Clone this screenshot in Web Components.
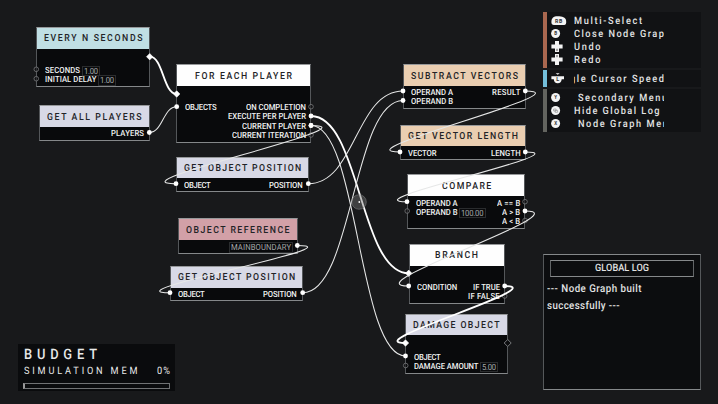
<!DOCTYPE html>
<html lang="en">
<head>
<meta charset="utf-8">
<title>Node Graph</title>
<style>
html,body{margin:0;background:#18191b;overflow:hidden}
</style>
</head>
<body>
<graph-screen></graph-screen>
<script>
// Condensed label whose tracking is set so that it fills the width w.
class FitText extends HTMLElement{
  connectedCallback(){
    const r=this.attachShadow({mode:'open'});
    r.innerHTML='<style>:host{display:block;white-space:pre;flex:none;line-height:1}span{display:inline-block;transform-origin:0 50%;text-rendering:geometricPrecision}</style><span><slot></slot></span>';
    const s=r.querySelector('span'),w=+this.getAttribute('w'),n=this.textContent.length,q=.9;
    this.style.width=w+'px';
    s.style.letterSpacing='0px';
    s.style.letterSpacing=((w/q-s.getBoundingClientRect().width)/(n-1)).toFixed(3)+'px';
    s.style.transform=`scaleX(${q})`;
  }
}
class GraphNode extends HTMLElement{
  connectedCallback(){
    const d=this.spec,[x,y,x2,y2,hb]=d.box;
    const r=this.attachShadow({mode:'open'});
    const row=o=>`<div class="row" style="margin-${o.side}:${o.gap}px"><fit-text w="${o.w}" ${o.box?'class="val"':''}>${o.t}</fit-text>${o.v?`<span class="box"><fit-text class="val" w="${o.vw}">${o.v}</fit-text></span>`:''}</div>`;
    const col=(a,side)=>`<div class="col ${side}">${a.map(o=>row({...o,side})).join('')}</div>`;
    r.innerHTML=`<style>
    :host{position:absolute;left:${x}px;top:${y}px;width:${x2-x}px;height:${y2-y}px;box-sizing:border-box;display:flex;flex-direction:column;background:#090a0c;border:1px solid #54575a;border-top-color:#96989a;border-bottom-color:#85888a;font:400 8.5px Roboto,sans-serif;color:#f1f2f2}
    header{height:${hb-y-1}px;flex:none;background:${d.color};color:#222326;display:flex;align-items:center;justify-content:center;font-size:9.7px;font-weight:500;padding-top:1px;box-sizing:border-box}
    main{display:flex;justify-content:space-between;padding-top:${d.first-hb-4.4}px}
    .col{display:flex;flex-direction:column}.right{align-items:flex-end}
    .row{height:9.4px;display:flex;align-items:center;gap:2px;font-weight:500}
    .box,.row>.val{border:1px solid #2a2c2e;padding:0 1px;height:8.5px;margin-bottom:-1px}
    .val{color:#a5a7a9;font-weight:400}
    </style><header><fit-text w="${d.tw}">${d.title}</fit-text></header><main>${col(d.left,'left')}${col(d.right||[],'right')}</main>`;
  }
}
const L=(t,w,gap=7.6,v,vw)=>({t,w,gap,v,vw}),R=(t,w,gap=4.4)=>({t,w,gap});
const lav='#d8d9e6',tan='#eaceb1',wht='#fefefe';
const NODES=[
 {title:'EVERY N SECONDS',tw:98.5,color:'#c0dfe4',box:[36,27,150.3,87,48.7],first:70.3,left:[L('SECONDS',35,7.6,'1.00',14),L('INITIAL DELAY',51.5,7.6,'1.00',14)]},
 {title:'GET ALL PLAYERS',tw:94.5,color:lav,box:[39,105,149.5,141,127],first:133.5,left:[],right:[R('PLAYERS',33)]},
 {title:'FOR EACH PLAYER',tw:97,color:wht,box:[176,64,311.3,143,86],first:107.5,left:[L('OBJECTS',31.6)],right:[R('ON COMPLETION',60),R('EXECUTE PER PLAYER',78),R('CURRENT PLAYER',64),R('CURRENT ITERATION',74.3)]},
 {title:'GET OBJECT POSITION',tw:117.3,color:lav,box:[176,156.5,309,192,178],first:185,left:[L('OBJECT',26.7,7.3)],right:[R('POSITION',33.6,5.2)]},
 {title:'OBJECT REFERENCE',tw:103.5,color:'#d2a0a7',box:[178,218,298,254,240],first:246.7,left:[],right:[{t:'MAINBOUNDARY',w:60,gap:4,box:1}]},
 {title:'GET OBJECT POSITION',tw:117.3,color:lav,box:[170,265.5,303,301,287.5],first:294,left:[L('OBJECT',26.7,7.3)],right:[R('POSITION',33.8,5)]},
 {title:'SUBTRACT VECTORS',tw:107,color:tan,box:[402.5,64,526,109,86],first:92.3,left:[L('OPERAND A',42),L('OPERAND B',42)],right:[R('RESULT',28.3)]},
 {title:'GET VECTOR LENGTH',tw:110,color:tan,box:[399.5,125,526,160,146],first:153,left:[L('VECTOR',28.6)],right:[R('LENGTH',29.6)]},
 {title:'COMPARE',tw:49.3,color:wht,box:[407,174,525.3,229,196],first:203,left:[L('OPERAND A',41.6),L('OPERAND B',41.6,7.6,'100.00',22.5)],right:[R('A == B',23.3,4),R('A &gt; B',18.2,4),R('A &lt; B',18.2,4)]},
 {title:'BRANCH',tw:43,color:wht,box:[408.5,243.5,505,304,265.5],first:287,left:[L('CONDITION',40.3)],right:[R('IF TRUE',27),R('IF FALSE',31.7)]},
 {title:'DAMAGE OBJECT',tw:86.5,color:lav,box:[405.3,313.5,508,374,335],first:357,left:[L('OBJECT',26.7,7.3),L('DAMAGE AMOUNT',64.5,7.3,'5.00',14)]}
];
// start x, start y, end x, end y, 1 when the wire carries execution
const WIRES=[[149.7,56.7,176.7,94,1],[149.3,132.5,176.7,106.7],[311,116,408.7,273.3,1],[311,125.5,405.5,356],[311,125.5,176,183.7],[308.3,183.7,403,91],[302.7,292.7,403,100.5],[297.3,245.5,170,292.7],[525.3,91,400,152],[525.3,152,407,201.7],[525,211,408.7,286],[504.7,286,405.5,343,1]];
const OPEN=[[36.3,69.3],[36.3,78.7],[311,106.7],[311,135],[407.2,211],[525,201.7],[525,220.5],[504.7,296],[405.7,365.5]];
class GraphWires extends HTMLElement{
  connectedCallback(){
    const r=this.attachShadow({mode:'open'});let s='';
    const exec=new Set(['149.7,56.7','176.7,94','408.7,273.3','405.5,343']);
    const port=(x,y)=>exec.has(x+','+y)?`<path d="M${x} ${y-3.2}l3.2 3.2-3.2 3.2-3.2-3.2z" fill="#fff" stroke="#fff" stroke-width=".6" stroke-linejoin="round"/>`:`<circle cx="${x}" cy="${y}" r="2.4" fill="#fff"/>`;
    for(const [x,y] of OPEN)s+=`<circle cx="${x}" cy="${y}" r="2.3" fill="#0b0c0e" fill-opacity=".5" stroke="#77797b" stroke-width=".8"/>`;
    s+='<path d="M507.7 339.5l3.5 3.5-3.5 3.5-3.5-3.5z" fill="#0b0c0e" stroke="#85878a" stroke-width=".9"/>';
    for(const [a,b,c,d,e] of WIRES){const k=Math.abs(c-a)/2;s+=`<path d="M${a} ${b}C${a+k} ${b} ${c-k} ${d} ${c} ${d}" fill="none" stroke="${e?'#fff':'#e6e7e7'}" stroke-width="${e?1.8:1.05}"/>`+port(a,b)+port(c,d);}
    s+='<circle cx="359" cy="202" r="7.3" fill="#777" fill-opacity=".42" stroke="#858789" stroke-opacity=".65" stroke-width=".8"/><circle cx="359.3" cy="202" r=".9" fill="#fff"/>';
    r.innerHTML=`<style>:host{position:absolute;inset:0;display:block}svg{display:block}</style><svg width="718" height="404">${s}</svg>`;
  }
}
const glyph=(c,x,y,z=4.5,f='#333')=>`<text x="${x}" y="${y}" font-family="Roboto" font-weight="700" font-size="${z}" fill="${f}" text-anchor="middle">${c}</text>`;
const disc='<circle cx="4.6" cy="6.5" r="4.5" fill="#f4f4f4"/>';
const pad='<path d="M4 1h4v3.600h3.600v4H8V12H4V8.600H.4v-4H4z" fill="#f4f4f4"/>';
const ICONS={
 rb:'<path d="M.4 8C.6 4 2.500 2.300 6.500 2.300c5 0 8 1 8.600 4.200.5 3.300-.4 4.500-2 4.500H3C1.300 11 .3 10 .4 8z" fill="#f4f4f4"/>'+glyph('R',5.700,8.600,5.200)+glyph('B',9.600,8.600,5.200),
 b:disc+glyph('B',4.600,8.200),y:disc+glyph('Y',4.600,8.200),x:disc+glyph('X',4.600,8.200),
 view:disc+'<path d="M2.600 5h2.500v2H2.600zM4.100 6.300h2.500v2H4.100z" fill="none" stroke="#888" stroke-width=".6"/>',
 down:pad+'<path d="M6 8.800v2.200" stroke="#555" stroke-width="1"/>',
 up:pad+'<path d="M6 2v2.200" stroke="#555" stroke-width="1"/>',
 stick:'<path d="M4.700 1.200h4L6.700 2.800zM.4 4.200h12.600v3h-2.300c-.3 2.600-1.500 4-4 4S3 9.800 2.800 7.200H.4z" fill="#f4f4f4"/>'+glyph('L',6.700,9.400,5.500)
};
class HintRow extends HTMLElement{
  connectedCallback(){
    const g=n=>this.getAttribute(n);
    this.attachShadow({mode:'open'}).innerHTML=`<style>:host{display:flex;align-items:center;height:13.1px;color:#e4e5e5;font:500 10.2px Roboto,sans-serif}svg{width:18px;height:13px;flex:none;margin-left:3.5px}.clip{width:90.3px;margin-left:5.2px;overflow:hidden;padding:3px 0 1px}fit-text{margin-left:${g('dx')||0}px}</style><svg viewBox="0 0 18 13">${ICONS[g('icon')]}</svg><div class="clip"><fit-text w="${g('w')}">${g('text')}</fit-text></div>`;
  }
}
class HintGroup extends HTMLElement{
  connectedCallback(){
    this.attachShadow({mode:'open'}).innerHTML=`<style>:host{display:flex;flex-direction:column;justify-content:center;box-sizing:border-box;border-left:4px solid ${this.getAttribute('bar')};background:#111214;height:${this.getAttribute('h')}px}</style><slot></slot>`;
  }
}
class LogPanel extends HTMLElement{
  connectedCallback(){
    this.attachShadow({mode:'open'}).innerHTML=`<style>:host{display:block;box-sizing:border-box;width:158px;height:136px;background:#0c0d0f;border:1px solid #55585a;border-top-color:#85888a;border-bottom-color:#85888a;color:#e2e3e3;padding:4.5px 6px;font:500 10.2px Roboto,sans-serif}header{height:17px;box-sizing:border-box;border:1px solid #626567;border-top-color:#85888a;border-bottom-color:#85888a;display:flex;align-items:center;justify-content:center;padding-top:1px}p{margin:5px 0 0 -3px;display:grid;grid-auto-rows:16.3px;align-items:center;font-size:10.8px}</style><header><fit-text w="54">GLOBAL LOG</fit-text></header><p><fit-text w="94.5">--- Node Graph built</fit-text><fit-text w="72.5">successfully ---</fit-text></p>`;
  }
}
class BudgetPanel extends HTMLElement{
  connectedCallback(){
    this.attachShadow({mode:'open'}).innerHTML=`<style>:host{display:block;box-sizing:border-box;width:157px;height:47px;background:#0a0b0d;padding:3px 5px 0 6px;color:#e8e9e9;font:400 10.2px Roboto,sans-serif}.t{font-size:14.3px;font-weight:500}.r{display:flex;justify-content:space-between;margin-top:3.7px;padding-right:.5px}.b{height:6px;box-sizing:border-box;border:1px solid #707274;margin:5.7px 0 0 -1px;border-left-width:2px;border-left-color:#999}</style><fit-text class="t" w="73">BUDGET</fit-text><div class="r"><fit-text w="113.5">SIMULATION MEM</fit-text><fit-text w="13">0%</fit-text></div><div class="b"></div>`;
  }
}
class GraphScreen extends HTMLElement{
  connectedCallback(){
    const r=this.attachShadow({mode:'open'});
    r.innerHTML=`<style>:host{display:block;position:relative;width:718px;height:404px;background:#18191b;overflow:hidden}
    .hints,log-panel,budget-panel{position:absolute}.hints{left:543px;top:12px;width:157.5px;display:grid;gap:2px}log-panel{left:543px;top:254px}budget-panel{left:18px;top:344px}</style>
    <div class="nodes"></div><graph-wires></graph-wires>
    <div class="hints">
    <hint-group bar="#a9674f" h="56"><hint-row icon="rb" text="Multi-Select" w="68"></hint-row><hint-row icon="b" text="Close Node Grap" w="89.8"></hint-row><hint-row icon="down" text="Undo" w="26.5"></hint-row><hint-row icon="up" text="Redo" w="26.5"></hint-row></hint-group>
    <hint-group bar="#74bfdb" h="17"><hint-row icon="stick" text="gle Cursor Speed" w="94" dx="-4"></hint-row></hint-group>
    <hint-group bar="#63645f" h="43"><hint-row icon="y" text="Secondary Menu" w="89" dx="4"></hint-row><hint-row icon="view" text="Hide Global Log" w="85.5"></hint-row><hint-row icon="x" text="Node Graph Menu" w="96.5" dx="4"></hint-row></hint-group></div>
    <log-panel></log-panel><budget-panel></budget-panel>`;
    const box=r.querySelector('.nodes');
    for(const n of NODES){const e=document.createElement('graph-node');e.spec=n;box.append(e);}
  }
}
customElements.define('fit-text',FitText);
customElements.define('graph-node',GraphNode);
customElements.define('graph-wires',GraphWires);
customElements.define('hint-row',HintRow);
customElements.define('hint-group',HintGroup);
customElements.define('log-panel',LogPanel);
customElements.define('budget-panel',BudgetPanel);
customElements.define('graph-screen',GraphScreen);
</script>
</body>
</html>
